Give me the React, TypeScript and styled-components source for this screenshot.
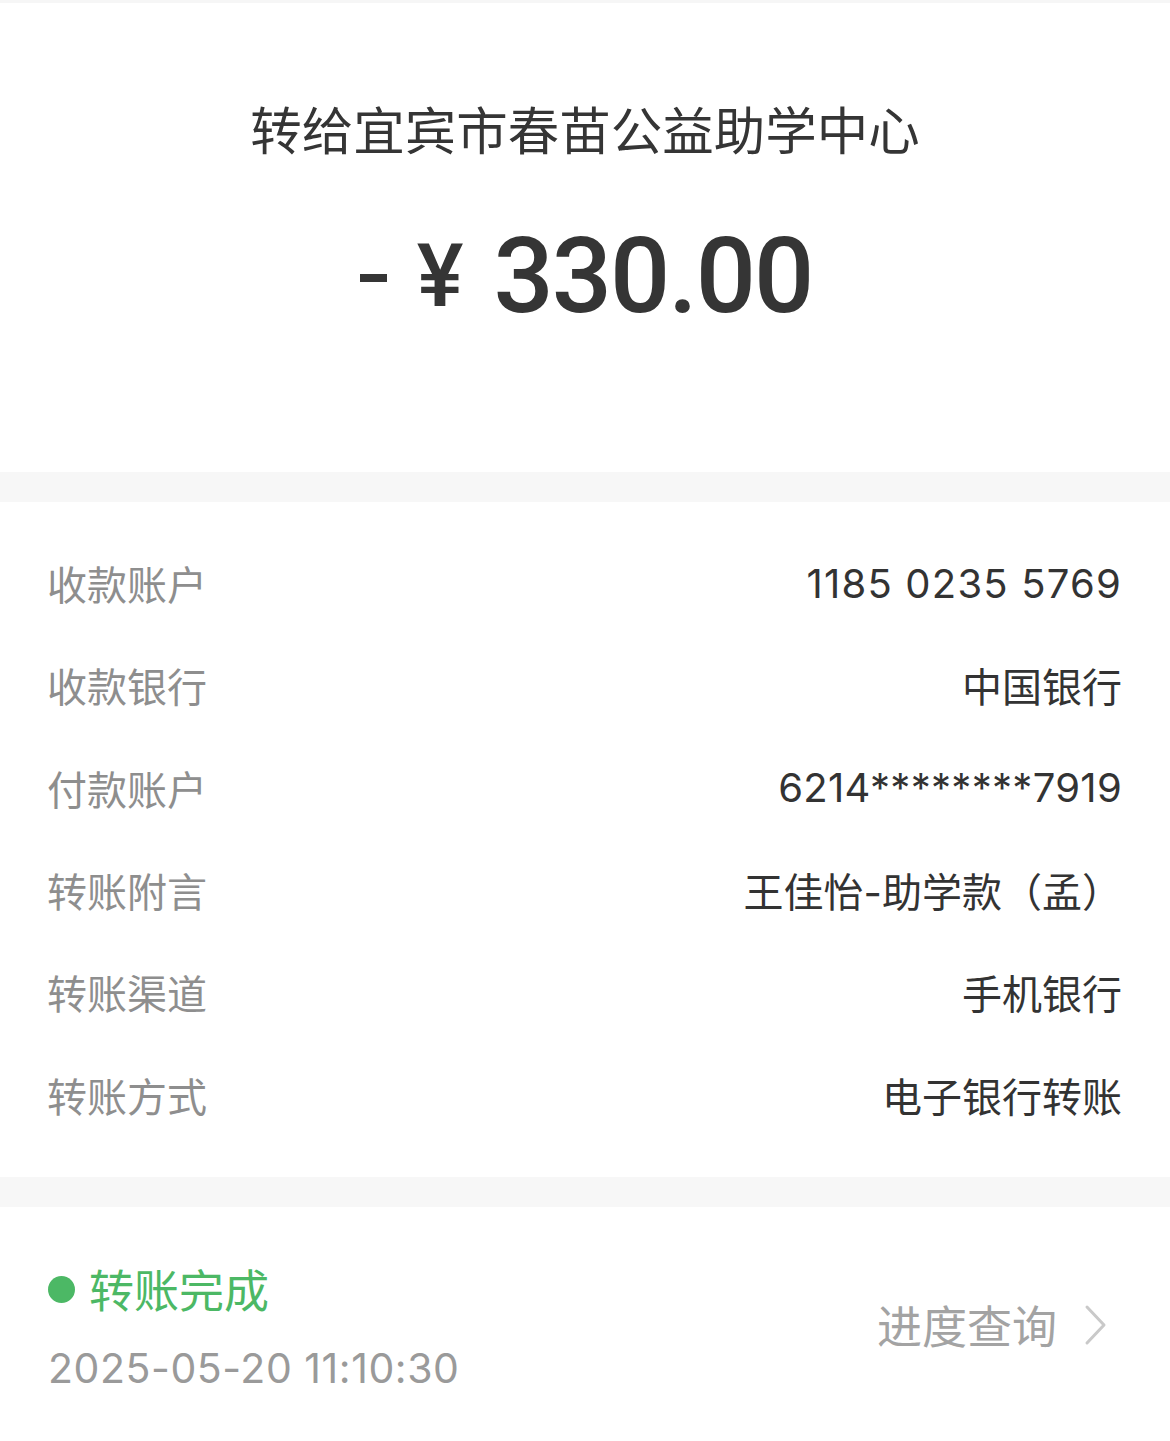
import styled, { createGlobalStyle } from "styled-components";

const GlobalStyle = createGlobalStyle`
  html, body {
    margin: 0;
    padding: 0;
    background: #ffffff;
  }

  body {
    font-family: "Inter", "Noto Sans CJK SC", sans-serif;
    color: #333333;
  }
`;

const rows = [
  { label: "收款账户", value: "1185 0235 5769", spacing: 1.2 },
  { label: "收款银行", value: "中国银行" },
  { label: "付款账户", value: "6214********7919", spacing: 0.3 },
  { label: "转账附言", value: "王佳怡-助学款（孟）" },
  { label: "转账渠道", value: "手机银行" },
  { label: "转账方式", value: "电子银行转账" },
];

export default function App() {
  return (
    <>
      <GlobalStyle />
      <Page>
        <TopStrip />
        <Header>
          <Title>转给宜宾市春苗公益助学中心</Title>
          <Amount>
            <Dash />
            <Yen>¥</Yen>
            <Digits>330.00</Digits>
          </Amount>
        </Header>
        <Divider />
        <Details>
          {rows.map((row) => (
            <Row key={row.label}>
              <Label>{row.label}</Label>
              <Value $spacing={row.spacing ?? 0}>{row.value}</Value>
            </Row>
          ))}
        </Details>
        <Divider />
        <Footer>
          <StatusBlock>
            <StatusLine>
              <Dot />
              <StatusText>转账完成</StatusText>
            </StatusLine>
            <DateText>2025-05-20 11:10:30</DateText>
          </StatusBlock>
          <Progress>
            <span>进度查询</span>
            <svg width="24" height="42" viewBox="0 0 24 42" fill="none">
              <path
                d="M3 3 L20 21 L3 39"
                stroke="#c9c9c9"
                strokeWidth="3"
                strokeLinecap="round"
                strokeLinejoin="round"
              />
            </svg>
          </Progress>
        </Footer>
      </Page>
    </>
  );
}

const Page = styled.div`
  width: 1170px;
  min-height: 1441px;
  display: flex;
  flex-direction: column;
  background: #ffffff;
`;

const TopStrip = styled.div`
  height: 3px;
  background: #f6f6f6;
`;

const Header = styled.div`
  height: 469px;
  display: flex;
  flex-direction: column;
  align-items: center;
`;

const Title = styled.h1`
  margin: 0;
  margin-top: 95px;
  font-family: "Noto Sans CJK SC", sans-serif;
  font-size: 51.5px;
  font-weight: 400;
  line-height: 60px;
  color: #353535;
`;

const Amount = styled.div`
  margin-top: 73px;
  display: flex;
  align-items: center;
  height: 90px;
  color: #353535;
  margin-left: 2px;
`;

const Dash = styled.div`
  width: 27px;
  height: 8px;
  background: #353535;
  margin-right: 30px;
  margin-top: 4px;
`;

const Yen = styled.span`
  font-family: "Roboto", sans-serif;
  font-weight: 500;
  font-size: 88px;
  line-height: 90px;
  margin-right: 30px;
`;

const Digits = styled.span`
  font-family: "Roboto", sans-serif;
  font-weight: 500;
  font-size: 106px;
  line-height: 90px;
  letter-spacing: -2px;
`;

const Divider = styled.div`
  height: 30px;
  background: #f7f7f7;
`;

const Details = styled.div`
  display: flex;
  flex-direction: column;
  padding: 30px 48px 31px 47px;
`;

const Row = styled.div`
  display: flex;
  justify-content: space-between;
  align-items: center;
  height: 102.3px;
`;

const Label = styled.span`
  font-family: "Noto Sans CJK SC", sans-serif;
  font-size: 40px;
  color: #8e8e8e;
`;

const Value = styled.span<{ $spacing: number }>`
  font-size: 40px;
  color: #333333;
  letter-spacing: ${(p) => p.$spacing}px;
`;

const Footer = styled.div`
  flex: 1;
  display: flex;
  justify-content: space-between;
  align-items: center;
  padding: 0 62px 20px 48px;
`;

const StatusBlock = styled.div`
  display: flex;
  flex-direction: column;
  gap: 24px;
  padding-top: 24px;
`;

const StatusLine = styled.div`
  display: flex;
  align-items: center;
  gap: 14px;
`;

const Dot = styled.div`
  width: 27px;
  height: 27px;
  border-radius: 50%;
  background: #4cb865;
  margin-top: 2px;
`;

const StatusText = styled.span`
  font-family: "Noto Sans CJK SC", sans-serif;
  font-size: 45px;
  line-height: 60px;
  color: #4cb865;
`;

const DateText = styled.span`
  font-size: 41px;
  line-height: 50px;
  letter-spacing: 0.55px;
  color: #9a9a9a;
`;

const Progress = styled.div`
  display: flex;
  align-items: center;
  gap: 27px;
  font-family: "Noto Sans CJK SC", sans-serif;
  font-size: 45px;
  color: #a3a3a3;
  margin-top: 22px;
`;
